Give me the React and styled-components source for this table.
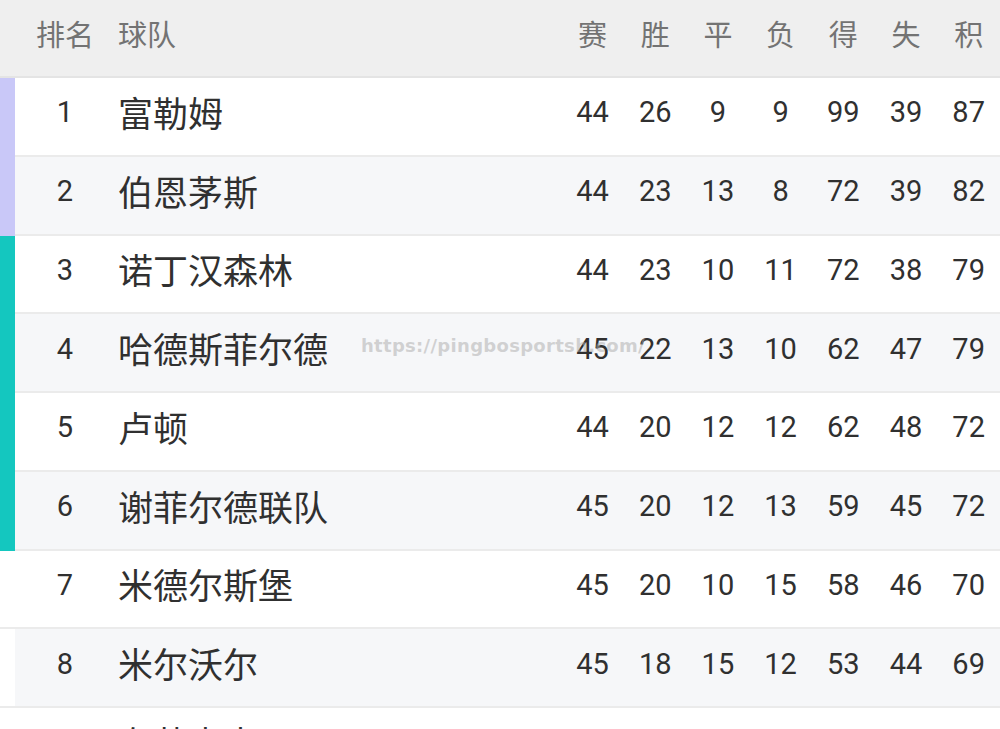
import React from "react";
import styled, { createGlobalStyle } from "styled-components";

const GlobalStyle = createGlobalStyle`
  html, body {
    margin: 0;
    padding: 0;
    background: #ffffff;
    overflow: hidden;
  }
  body {
    font-family: Roboto, "Noto Sans CJK SC", sans-serif;
  }
`;

const standings = [
  { rank: 1, team: "富勒姆", stats: [44, 26, 9, 9, 99, 39, 87], zone: "promo" },
  { rank: 2, team: "伯恩茅斯", stats: [44, 23, 13, 8, 72, 39, 82], zone: "promo" },
  { rank: 3, team: "诺丁汉森林", stats: [44, 23, 10, 11, 72, 38, 79], zone: "playoff" },
  { rank: 4, team: "哈德斯菲尔德", stats: [45, 22, 13, 10, 62, 47, 79], zone: "playoff" },
  { rank: 5, team: "卢顿", stats: [44, 20, 12, 12, 62, 48, 72], zone: "playoff" },
  { rank: 6, team: "谢菲尔德联队", stats: [45, 20, 12, 13, 59, 45, 72], zone: "playoff" },
  { rank: 7, team: "米德尔斯堡", stats: [45, 20, 10, 15, 58, 46, 70] },
  { rank: 8, team: "米尔沃尔", stats: [45, 18, 15, 12, 53, 44, 69] },
  { rank: 9, team: "布莱克本", stats: [45, 19, 12, 14, 58, 50, 69] },
];

const headers = ["赛", "胜", "平", "负", "得", "失", "积"];

const zoneColors = {
  promo: "#c9c8f8",
  playoff: "#14c7bf",
};

const Page = styled.div`
  position: relative;
  width: 1000px;
  height: 729px;
  overflow: hidden;
  background: #ffffff;
`;

const Grid = styled.div`
  display: grid;
  grid-template-columns: 15px 100px 1fr repeat(7, 62.7px);
`;

const HeaderRow = styled.div`
  display: contents;
`;

const HeaderCell = styled.div`
  height: 78px;
  background: #efefef;
  border-bottom: 2px solid #e4e4e4;
  display: flex;
  align-items: center;
  justify-content: ${(p) => (p.$left ? "flex-start" : "center")};
  padding-left: ${(p) => (p.$left ? "3px" : "0")};
  padding-bottom: 10px;
  box-sizing: border-box;
  font-size: 29px;
  color: #737373;
`;

const Row = styled.div`
  display: contents;
`;

const Marker = styled.div`
  height: 78.75px;
  box-sizing: border-box;
  background: ${(p) => p.$color || "#ffffff"};
  border-bottom: 2px solid ${(p) => p.$color || "#ebebeb"};
`;

const Cell = styled.div`
  height: 78.75px;
  box-sizing: border-box;
  background: ${(p) => (p.$shade ? "#f6f7f9" : "#ffffff")};
  border-bottom: 2px solid #ebebeb;
  display: flex;
  align-items: center;
  justify-content: ${(p) => (p.$left ? "flex-start" : "center")};
  padding-left: ${(p) => (p.$left ? "3px" : "0")};
  padding-bottom: ${(p) => (p.$team ? "10px" : "8px")};
  color: #303030;
  font-size: ${(p) => (p.$team ? "35px" : "29px")};
  white-space: nowrap;
`;

const Watermark = styled.div`
  position: absolute;
  left: 361px;
  top: 335px;
  font-family: "DejaVu Sans", sans-serif;
  font-weight: bold;
  font-size: 18px;
  letter-spacing: 0.3px;
  color: rgba(170, 170, 170, 0.5);
  pointer-events: none;
`;

export default function App() {
  return (
    <Page>
      <GlobalStyle />
      <Grid>
        <HeaderRow>
          <HeaderCell />
          <HeaderCell>排名</HeaderCell>
          <HeaderCell $left>球队</HeaderCell>
          {headers.map((h) => (
            <HeaderCell key={h}>{h}</HeaderCell>
          ))}
        </HeaderRow>
        {standings.map((item, index) => {
          const shade = index % 2 === 1;
          return (
            <Row key={item.rank}>
              <Marker $color={zoneColors[item.zone]} />
              <Cell $shade={shade}>{item.rank}</Cell>
              <Cell $shade={shade} $left $team>
                {item.team}
              </Cell>
              {item.stats.map((value, i) => (
                <Cell $shade={shade} key={i}>
                  {value}
                </Cell>
              ))}
            </Row>
          );
        })}
      </Grid>
      <Watermark>https://pingbosportsh.com/</Watermark>
    </Page>
  );
}
